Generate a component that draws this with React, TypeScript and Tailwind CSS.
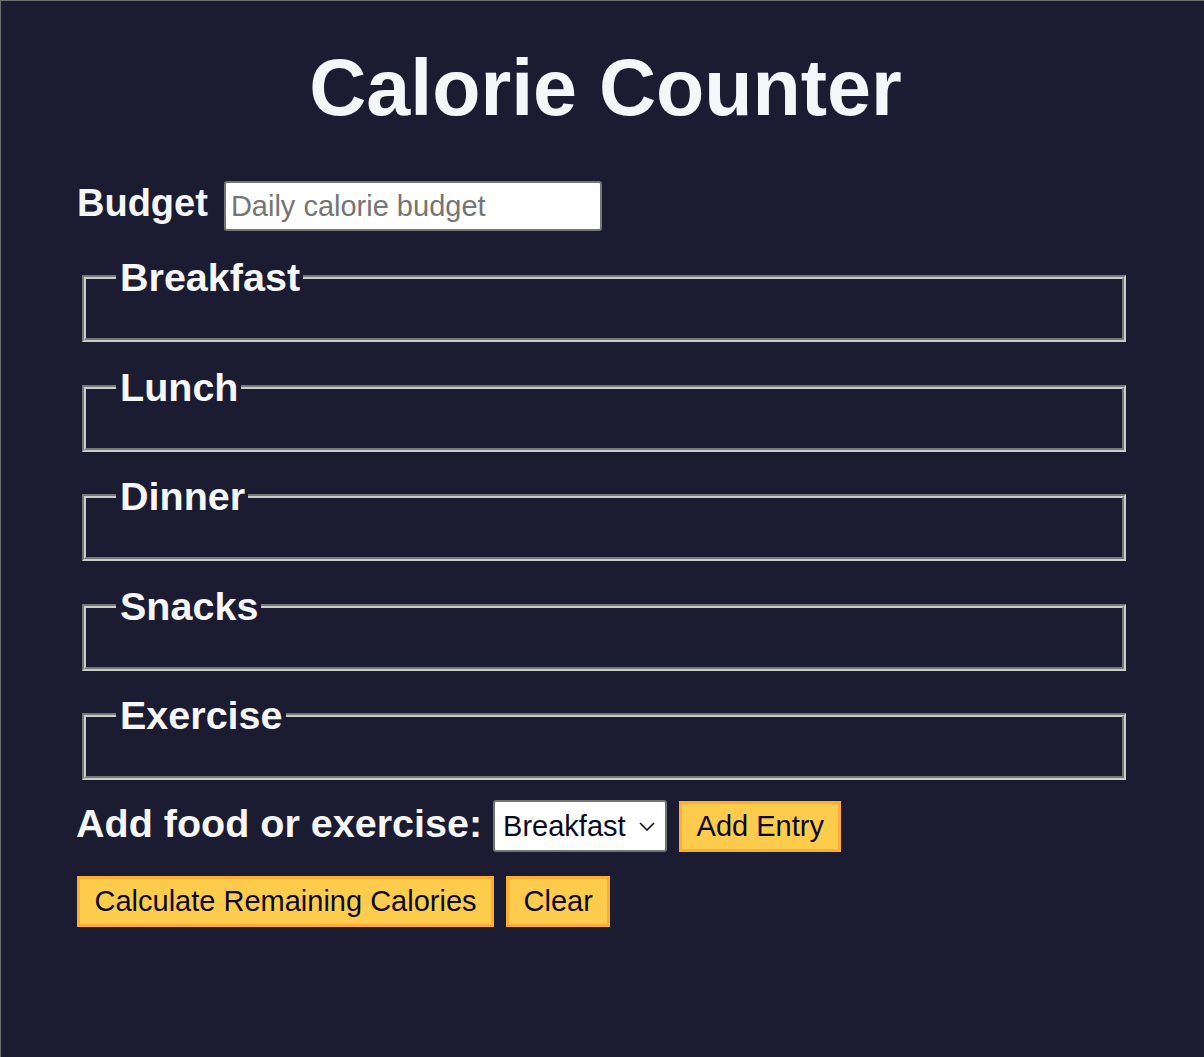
import React, { useState } from 'react';

const meals = ['Breakfast', 'Lunch', 'Dinner', 'Snacks', 'Exercise'];

export default function App() {
  const [budget, setBudget] = useState('');
  const [entryType, setEntryType] = useState('breakfast');

  return (
    <div className="min-h-screen bg-[#1b1b32] border-l border-t border-[#707070] text-[#f5f6f7] font-['Liberation_Sans',Arial,sans-serif] pt-[47px]">
      <h1 className="text-center text-[79px] leading-[80px] font-bold pl-[6px]">Calorie Counter</h1>

      <div className="pl-[76px] pr-[77px]">
        {/* Budget */}
        <div className="flex items-start gap-[16px] mt-[51px]">
          <label htmlFor="budget" className="mt-[2px] text-[38px] leading-[44px] font-bold">
            Budget
          </label>
          <input
            id="budget"
            type="number"
            placeholder="Daily calorie budget"
            value={budget}
            onChange={(e) => setBudget(e.target.value)}
            className="mt-[2px] w-[378px] h-[50px] bg-white border-2 border-[#767676] rounded-[3px] pl-[5px] text-[29px] text-[#0a0a23] placeholder:text-[#757575] outline-none"
          />
        </div>

        {/* Meal fieldsets */}
        <div className="flex flex-col gap-[22.5px] mt-[24px]">
          {meals.map((meal) => (
            <fieldset
              key={meal}
              className="ml-[5px] mr-[1px] [border:4px_groove_#cccccc] px-[30px] pb-[39px]"
            >
              <legend className="pl-[4px] pr-[3px] text-[39.5px] leading-[44px] font-bold">{meal}</legend>
            </fieldset>
          ))}
        </div>

        {/* Controls */}
        <div className="flex items-start mt-[20px]">
          <label htmlFor="entry-dropdown" className="-ml-[1px] mt-[1px] text-[39.5px] leading-[44px] font-bold">
            Add food or exercise:
          </label>
          <div className="relative ml-[11px]">
            <select
              id="entry-dropdown"
              value={entryType}
              onChange={(e) => setEntryType(e.target.value)}
              className="appearance-none w-[174px] h-[52px] bg-white border-2 border-[#767676] rounded-[3px] pl-[8px] pt-[1px] text-[29px] text-[#0a0a23] outline-none"
            >
              {meals.map((meal) => (
                <option key={meal} value={meal.toLowerCase()}>
                  {meal}
                </option>
              ))}
            </select>
            <svg
              className="absolute right-[12px] top-[22px] pointer-events-none"
              width="16"
              height="9"
              viewBox="0 0 16 9"
            >
              <path d="M1 1l7 7 7-7" stroke="#0a0a23" strokeWidth="1.6" fill="none" />
            </svg>
          </div>
          <button
            type="button"
            className="ml-[12px] mt-[1px] h-[51px] px-[14.5px] pt-[1px] bg-[#fecc4c] border-[3px] border-[#feac32] text-[29px] text-[#0a0a23]"
          >
            Add Entry
          </button>
        </div>

        <div className="flex gap-[12px] mt-[24px]">
          <button
            type="button"
            className="h-[51px] px-[14.5px] bg-[#fecc4c] border-[3px] border-[#feac32] text-[29px] text-[#0a0a23]"
          >
            Calculate Remaining Calories
          </button>
          <button
            type="button"
            className="h-[51px] px-[14.5px] bg-[#fecc4c] border-[3px] border-[#feac32] text-[29px] text-[#0a0a23]"
          >
            Clear
          </button>
        </div>
      </div>
    </div>
  );
}
